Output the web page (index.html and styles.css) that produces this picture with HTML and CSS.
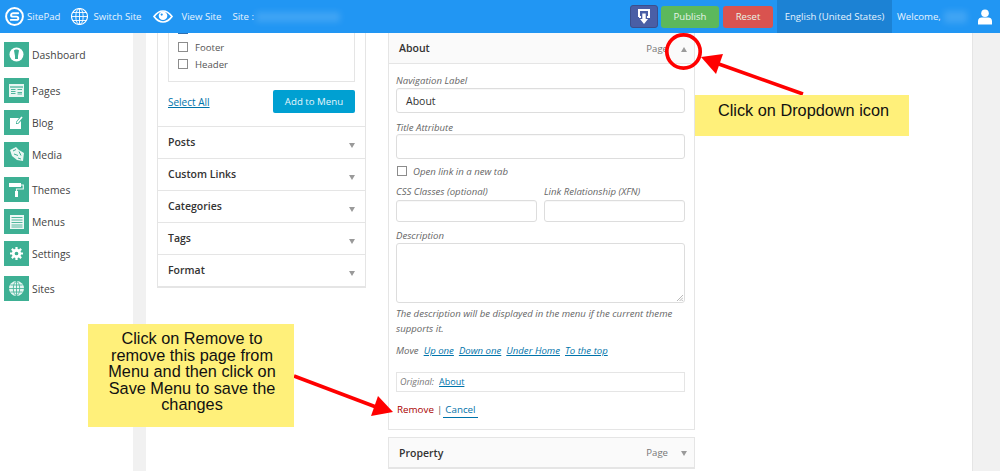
FILE: index.html
```html
<!DOCTYPE html>
<html lang="en">
<head>
<meta charset="utf-8">
<title>SitePad Menus</title>
<link rel="stylesheet" href="styles.css">
</head>
<body>
<header class="topbar">
  <div class="tb-left">
    <span class="tb-item logo-item">
      <svg class="tb-icon" width="19" height="19" viewBox="0 0 19 19"><circle cx="9.500" cy="9.500" r="8.400" fill="none" stroke="#fff" stroke-width="2"/><path d="M13.200 6.200H8a2 2 0 0 0-2 1.700c0 1.200 1 1.700 2 1.700h3.400c1 0 1.900.6 1.900 1.600s-.9 1.700-1.900 1.700H5.800" fill="none" stroke="#fff" stroke-width="1.900" stroke-linecap="round"/></svg>
      SitePad</span>
    <span class="tb-item switch-item">
      <svg class="tb-icon" width="17" height="17" viewBox="0 0 17 17" fill="none" stroke="#fff" stroke-width=".9"><circle cx="8.500" cy="8.500" r="8" stroke-width="1.100"/><ellipse cx="8.500" cy="8.500" rx="3.700" ry="8"/><path d="M8.500.5v16M.5 8.500h16M1.800 4.500h13.400M1.800 12.500h13.400"/></svg>
      Switch Site</span>
    <span class="tb-item view-item">
      <svg class="tb-icon" width="20" height="13" viewBox="0 0 20 13"><path d="M1 6.500C4 2.500 7 1 10 1s6 1.500 9 5.500c-3 4-6 5.500-9 5.500S4 10.500 1 6.500z" fill="none" stroke="#fff" stroke-width="1.700"/><circle cx="10" cy="5.800" r="4.300" fill="#fff"/><circle cx="8.700" cy="4.600" r="1.100" fill="#2196f3"/></svg>
      View Site</span>
    <span class="tb-item site-item">Site : <span class="blur site-blur"></span></span>
  </div>
  <div class="tb-right">
    <button class="btn-dl" type="button" aria-label="Download">
      <svg width="12" height="15" viewBox="0 0 12 15"><path d="M1 8V1h10v7H9" fill="none" stroke="#fff" stroke-width="2"/><path d="M1 8h2" stroke="#fff" stroke-width="2"/><path d="M4.300 4.500h3.400V10H10l-4 5-4-5h2.300z" fill="#fff"/></svg>
    </button>
    <button class="btn-act btn-publish" type="button">Publish</button>
    <button class="btn-act btn-reset" type="button">Reset</button>
    <span class="lang">English (United States)</span>
    <span class="welcome">Welcome,<span class="blur user-blur"></span></span>
    <svg class="user-icon" width="14" height="16" viewBox="0 0 14 16"><circle cx="7" cy="4.200" r="3.800" fill="#fff"/><path d="M0 15.500V12c0-2.500 2-3.500 3.500-3.500h7C12 8.500 14 9.500 14 12v3.500z" fill="#fff"/></svg>
  </div>
</header>

<div class="layout">
  <nav class="sidebar">
    <a class="nav-item ni-dash"><span class="nav-icon"><svg width="15" height="15" viewBox="0 0 15 15"><circle cx="7.500" cy="7.500" r="7" fill="#fff"/><path d="M5 3.500c1-1.200 4-1.200 5 0L9 9v3H6V9z" fill="#3eb094"/></svg></span>Dashboard</a>
    <a class="nav-item ni-pages"><span class="nav-icon"><svg width="15" height="13" viewBox="0 0 15 13"><path d="M0 0h15v13H0z" fill="#e8f6f2"/><path d="M1 3h13" stroke="#3eb094" stroke-width="1.200"/><path d="M2 5.500h4.500M2 7.500h4.500M2 9.500h4.500M8.500 5.500H13M8.500 8.500H13M8.500 10H13" stroke="#3eb094" stroke-width=".9"/></svg></span>Pages</a>
    <a class="nav-item ni-blog"><span class="nav-icon"><svg width="13" height="13" viewBox="0 0 13 13"><path d="M0 2h9L6 6v2h2l3-3v8H0z" fill="#fff"/><path d="M7 7l5-6" stroke="#fff" stroke-width="1.600"/></svg></span>Blog</a>
    <a class="nav-item ni-media"><span class="nav-icon"><svg width="16" height="15" viewBox="0 0 16 15"><path d="M1 3l6-3 3 3 5 3-1 8-6-1-5-4z" fill="#eaf7f3"/><path d="M4 4l3-1.500M5 7l4 1.500M9 11l3 1M10 4.500l2 4" stroke="#3eb094" fill="none"/></svg></span>Media</a>
    <a class="nav-item ni-themes"><span class="nav-icon"><svg width="15" height="14" viewBox="0 0 15 14"><path d="M0 0h12v4H0z" fill="#fff"/><path d="M12 2h2.300v4H7.500v2" fill="none" stroke="#e8f6f2" stroke-width="1.200"/><path d="M6 8h3v6H6z" fill="#fff"/></svg></span>Themes</a>
    <a class="nav-item ni-menus"><span class="nav-icon"><svg width="14" height="14" viewBox="0 0 14 14"><path d="M0 0h14v14H0z" fill="#eef8f5"/><path d="M1.500 2.500h11M1.500 5h11M1.500 7.500h11M1.500 10h11M1.500 12h11" stroke="#3eb094" stroke-width=".9"/></svg></span>Menus</a>
    <a class="nav-item ni-settings"><span class="nav-icon"><svg width="13" height="13" viewBox="0 0 14 14"><circle cx="7" cy="7" r="3.500" fill="none" stroke="#fff" stroke-width="3"/><path d="M7 0v3M7 11v3M0 7h3M11 7h3M2 2l2 2M10 10l2 2M12 2l-2 2M4 10l-2 2" stroke="#fff" stroke-width="2.400"/></svg></span>Settings</a>
    <a class="nav-item ni-sites"><span class="nav-icon"><svg width="15" height="15" viewBox="0 0 15 15"><circle cx="7.500" cy="7.500" r="7.500" fill="#e8f6f2"/><g fill="none" stroke="#3eb094" stroke-width=".8"><ellipse cx="7.500" cy="7.500" rx="3.200" ry="7"/><path d="M7.500 0v15M0 7.500h15M1.500 4h12M1.500 11h12"/></g></svg></span>Sites</a>
  </nav>

  <main class="content">
    <section class="col-left">
      <div class="panel-left">
        <div class="checklist">
          <span class="check check-blue"></span>
          <label class="check-row"><span class="check"></span>Footer</label>
          <label class="check-row"><span class="check"></span>Header</label>
        </div>
        <div class="add-row">
          <a class="link select-all">Select All</a>
          <button class="btn-add" type="button">Add to Menu</button>
        </div>
        <div class="acc-row">Posts<i class="tri"></i></div>
        <div class="acc-row">Custom Links<i class="tri"></i></div>
        <div class="acc-row">Categories<i class="tri"></i></div>
        <div class="acc-row">Tags<i class="tri"></i></div>
        <div class="acc-row">Format<i class="tri"></i></div>
      </div>
    </section>

    <section class="col-right">
      <div class="item-card">
        <div class="item-head"><b>About</b><span class="item-type">Page</span><i class="tri tri-up"></i></div>
        <div class="item-body">
          <div class="fld-label">Navigation Label</div>
          <div class="input input-val">About</div>
          <div class="fld-label lbl-title">Title Attribute</div>
          <div class="input"></div>
          <label class="newtab"><span class="check"></span>Open link in a new tab</label>
          <div class="two-col">
            <div class="col"><div class="fld-label">CSS Classes (optional)</div><div class="input input-sm"></div></div>
            <div class="col"><div class="fld-label">Link Relationship (XFN)</div><div class="input input-sm"></div></div>
          </div>
          <div class="fld-label lbl-desc">Description</div>
          <div class="textarea"><svg class="grip" width="6" height="6" viewBox="0 0 7 7"><path d="M7 0L0 7M7 3L3 7M7 5.500L5.500 7" stroke="#999" stroke-width=".8"/></svg></div>
          <p class="hint">The description will be displayed in the menu if the current theme supports it.</p>
          <div class="move">Move <a class="link">Up one</a> <a class="link">Down one</a> <a class="link">Under Home</a> <a class="link">To the top</a></div>
          <div class="original"><em>Original:</em> <a class="link">About</a></div>
          <div class="actions"><a class="remove">Remove</a><span class="sep">|</span><a class="cancel">Cancel</a></div>
        </div>
      </div>
      <div class="item-head item-closed"><b>Property</b><span class="item-type">Page</span><i class="tri"></i></div>
    </section>
  </main>
</div>

<svg class="overlay" width="1000" height="471" viewBox="0 0 1000 471" aria-hidden="true">
  <circle cx="683.500" cy="51.500" r="16.700" fill="none" stroke="#f00" stroke-width="3.700"/>
  <path d="M803 94L716 63" stroke="#f00" stroke-width="3.500" fill="none"/>
  <path d="M701 57L723 54 716 74z" fill="#f00"/>
  <path d="M294 376L376 407" stroke="#f00" stroke-width="3.500" fill="none"/>
  <path d="M393 412L371 416 378 396z" fill="#f00"/>
</svg>
<div class="note note-top">Click on Dropdown icon</div>
<div class="note note-bottom">Click on Remove to remove this page from Menu and then click on Save Menu to save the changes</div>
</body>
</html>
```
FILE: styles.css
```css
* { box-sizing: border-box; }
html, body { margin: 0; height: 471px; overflow: hidden; }
body { font-family: "Open Sans", "Liberation Sans", sans-serif; font-size: 11px; color: #444; background: #f1f1f1; position: relative; }

.topbar { height: 33px; background: #2196f3; color: #e6f3fe; display: flex; justify-content: space-between; align-items: stretch; position: relative; z-index: 2; font-size: 9.600px; }
.tb-left { display: flex; align-items: center; padding-left: 5px; }
.tb-item { display: flex; align-items: center; white-space: nowrap; }
.tb-icon { flex: none; }
.logo-item { gap: 3px; }
.switch-item { margin-left: 11px; gap: 5px; }
.view-item { margin-left: 12px; gap: 8px; }
.site-item { margin-left: 11px; gap: 2px; }
.blur { filter: blur(3px); background: rgba(255,255,255,.14); }
.site-blur { width: 84px; height: 10px; display: inline-block; }
.tb-right { display: flex; align-items: center; }
.btn-dl { width: 28px; height: 23px; background: #4a5fa5; border: 1px solid #3c4f8c; border-radius: 3px; padding: 0; display: flex; align-items: center; justify-content: center; margin-right: 3px; }
.btn-act { height: 22px; border: 0; border-radius: 3px; color: #e8f3e8; font: 9.600px "Open Sans", sans-serif; padding: 0; margin-right: 4px; }
.btn-publish { width: 58px; background: #5cb85c; }
.btn-reset { width: 50px; background: #d9534f; }
.lang { width: 115px; align-self: stretch; background: #1c82d4; display: flex; align-items: center; justify-content: center; }
.welcome { margin-left: 5px; display: flex; align-items: center; gap: 3px; width: 81px; white-space: nowrap; }
.user-blur { width: 23px; display: inline-block; height: 12px; }
.user-icon { margin-right: 8px; flex: none; }

.layout { display: flex; height: 438px; }
.sidebar { width: 133px; flex: none; background: #fff; padding: 9px 0 0 4px; }
.nav-item { display: flex; align-items: center; gap: 3px; height: 25px; font-size: 10.400px; color: #444; margin-bottom: 7px; }
.nav-icon { width: 25px; height: 25px; background: #3eb094; display: flex; align-items: center; justify-content: center; flex: none; }
.ni-dash { margin-bottom: 11px; }
.ni-media { margin-bottom: 10px; }
.ni-settings { margin-bottom: 10px; }

.content { width: 827px; flex: none; margin-left: 13px; background: #fff; display: flex; padding-left: 11px; border-right: 1px solid #e5e5e5; height: 438px; overflow: hidden; }
.col-left { width: 209px; flex: none; }
.panel-left { border: 1px solid #e5e5e5; border-top: 0; border-bottom: 2px solid #e5e5e5; }
.checklist { margin: 0 10px; height: 49px; border: 1px solid #e5e5e5; border-top: 0; padding: 9px 0 0 9px; position: relative; }
.check { width: 10px; height: 10px; border: 1px solid #8c8c8c; background: #fff; display: inline-block; flex: none; }
.check-blue { position: absolute; left: 9px; top: -9px; background: #2f6fb0; border-color: #2f6fb0; }
.check-row { display: flex; align-items: center; gap: 7px; height: 10px; margin-bottom: 7px; color: #555; font-size: 9.600px; }
.add-row { display: flex; justify-content: space-between; align-items: center; margin: 8px 10px 0; padding-bottom: 13px; }
.link { color: #0073aa; text-decoration: underline; }
.select-all { font-size: 10px; }
.btn-add { width: 82px; height: 23px; background: #00a0d2; color: #e6f6fb; border: 0; border-radius: 2px; font: 9.700px "Open Sans", sans-serif; padding: 0; }
.acc-row { height: 32px; border-top: 1px solid #e5e5e5; padding: 0 11px 1px 10px; display: flex; align-items: center; justify-content: space-between; font-size: 10.500px; font-weight: 600; color: #333; }
.tri { width: 0; height: 0; border-left: 3.500px solid transparent; border-right: 3.500px solid transparent; border-top: 5px solid #9a9a9a; display: block; position: relative; top: 3px; left: 1px; }
.tri-up { border-top: 0; border-bottom: 5px solid #9a9a9a; top: 0; }

.col-right { width: 307px; flex: none; margin-left: 22px; }
.item-card { border: 1px solid #e5e5e5; border-top: 0; height: 397px; }
.item-head { height: 31px; background: #fafafa; border-bottom: 1px solid #e5e5e5; display: flex; align-items: center; padding: 0 7px 0 10px; font-size: 10.500px; color: #333; }
.item-head b { font-weight: 600; }
.item-type { margin-left: auto; margin-right: 13px; color: #777; font-size: 9.600px; }
.item-head .tri { left: 0; top: 1px; }
.item-closed { margin-top: 7px; height: 32px; border: 1px solid #e5e5e5; border-bottom-width: 2px; }
.item-body { padding: 9px 9px 0 7px; }
.fld-label { font-style: italic; font-size: 9.600px; color: #666; height: 15px; line-height: 15px; }
.input { height: 25px; border: 1px solid #ddd; border-radius: 3px; background: #fff; box-shadow: inset 0 1px 1px rgba(0,0,0,.03); }
.input-val { font-size: 10.500px; color: #333; padding-left: 9px; display: flex; align-items: center; }
.lbl-title { margin-top: 7px; height: 14px; line-height: 15px; }
.newtab { display: flex; align-items: center; gap: 6px; margin: 7px 0 0 1px; height: 10px; font-style: italic; font-size: 9.600px; color: #666; }
.two-col { display: flex; gap: 7px; margin-top: 9px; }
.col { width: 141px; }
.col .fld-label { height: 15px; line-height: 14px; }
.input-sm { height: 22px; }
.lbl-desc { margin-top: 7px; height: 14px; line-height: 14px; }
.textarea { height: 60px; border: 1px solid #ddd; border-radius: 3px; position: relative; }
.grip { position: absolute; right: 1px; bottom: 1px; }
.hint { margin: 2.500px 0 0; font-style: italic; font-size: 9.600px; line-height: 15px; color: #666; }
.move { margin-top: 7px; font-style: italic; font-size: 9.600px; color: #666; display: flex; gap: 5px; line-height: 15px; }
.original { margin-top: 14px; height: 20px; border: 1px solid #e5e5e5; padding-left: 3px; font-size: 9px; display: flex; align-items: center; gap: 5px; color: #777; }
.actions { margin-top: 10px; font-size: 9.800px; display: flex; align-items: center; line-height: 15px; margin-left: 1px; }
.remove { color: #a00; }
.sep { margin: 0 1px 0 3px; color: #555; }
.cancel { color: #0073aa; border-bottom: 1px solid #0073aa; padding: 0 2px; }

.overlay { position: absolute; left: 0; top: 0; z-index: 3; pointer-events: none; }
.note { position: absolute; z-index: 4; background: #fff07a; color: #111; font-family: "Liberation Sans", Arial, sans-serif; text-align: center; }
.note-top { left: 695px; top: 95px; width: 214px; height: 41px; font-size: 16.300px; line-height: 18px; padding: 6px 0 0 3px; }
.note-bottom { left: 88px; top: 324px; width: 206px; height: 103px; font-size: 16.300px; line-height: 16.500px; padding: 6px 13px 0 15px; }
```
